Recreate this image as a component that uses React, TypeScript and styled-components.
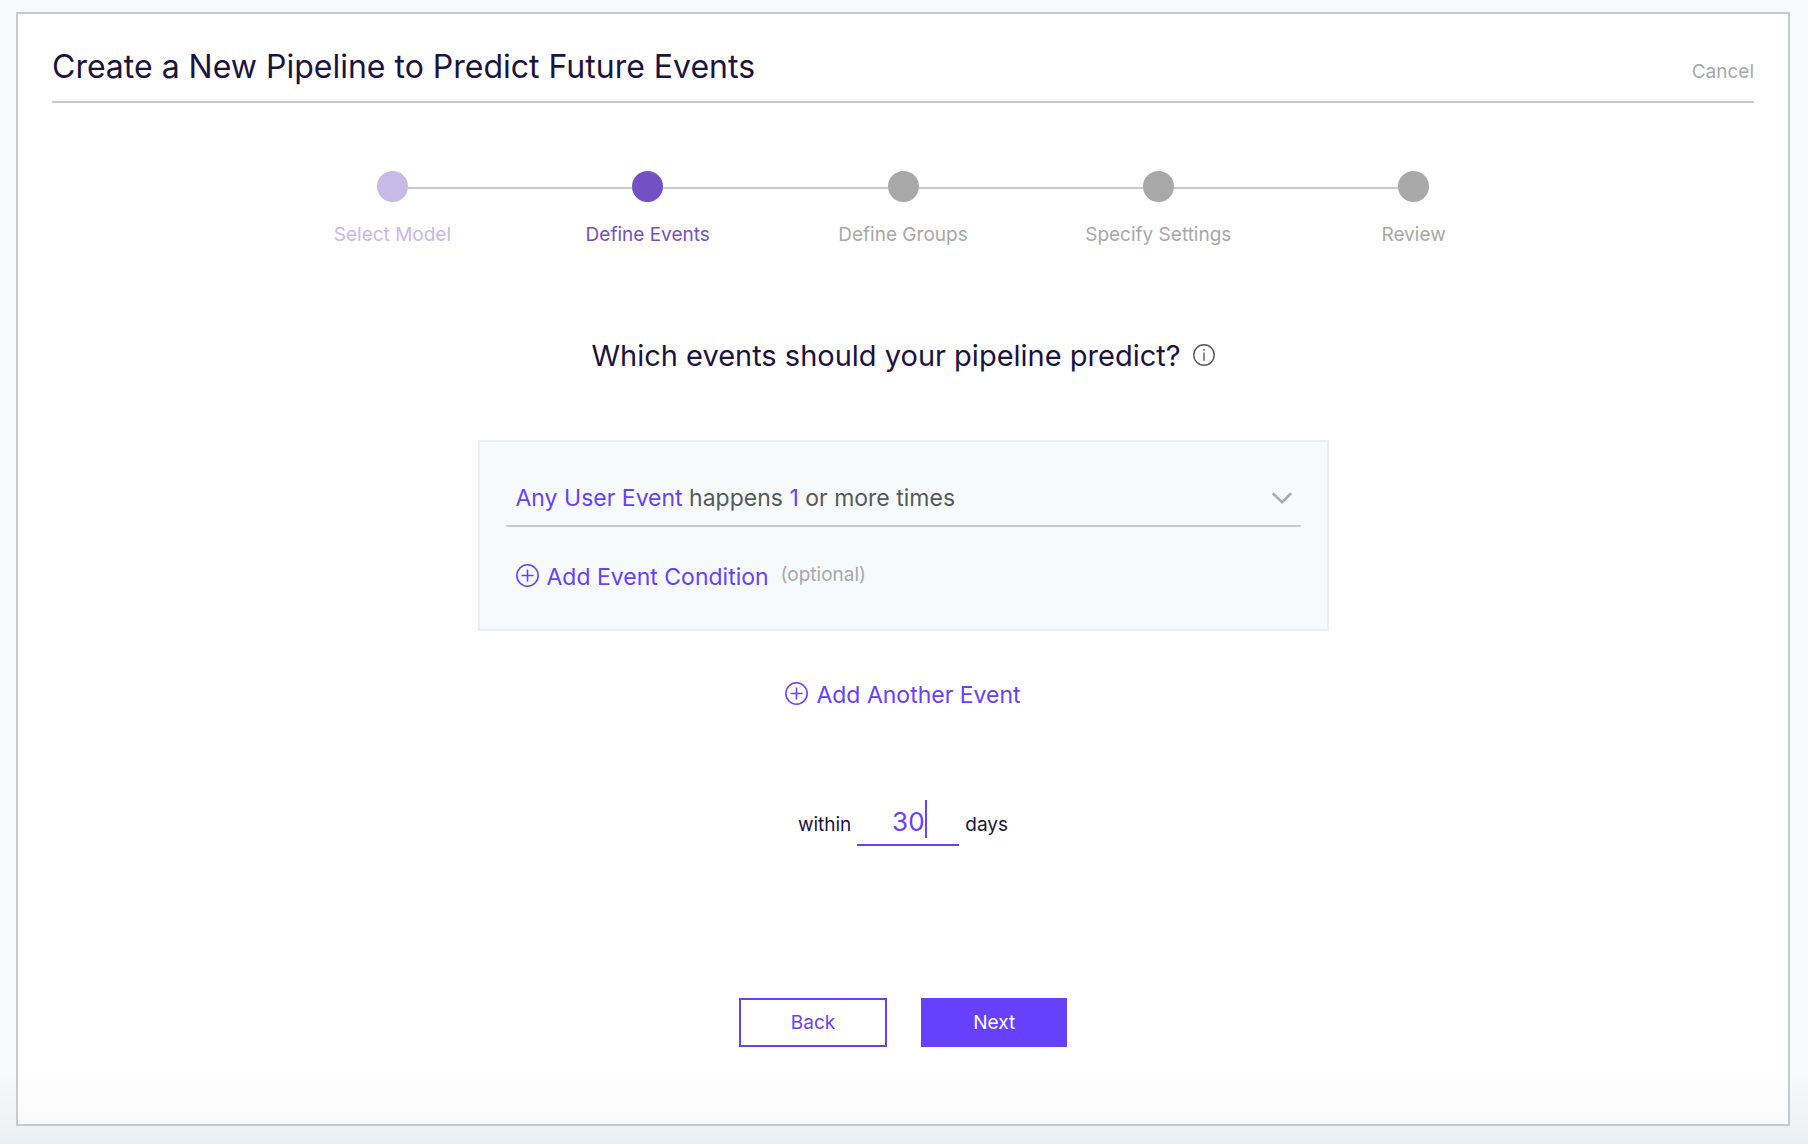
import React, { useState } from "react";
import styled, { createGlobalStyle } from "styled-components";

const color = {
  ink: "#1b1340",
  body: "#585858",
  muted: "#a8a8a8",
  line: "#c6cacc",
  panel: "#f6fafb",
  accent: "#6640fb",
  step: "#7350c3",
  stepDone: "#c7b9e8",
};

const GlobalStyle = createGlobalStyle`
  *, *::before, *::after { box-sizing: border-box; }
  body {
    margin: 0;
    background: ${color.panel};
    font-family: Inter, "Liberation Sans", sans-serif;
    font-weight: 400;
    color: ${color.ink};
  }
  button, input, select { font: inherit; color: inherit; }
`;

const Page = styled.div`
  display: flex;
  min-height: 100vh;
  padding: 12px 18px 18px 16px;
  background: linear-gradient(to top, #ebeff0, ${color.panel} 72px);
`;

const Card = styled.main`
  flex: 1;
  display: flex;
  flex-direction: column;
  align-items: center;
  padding: 32px 34px 40px;
  border: 2px solid ${color.line};
  background: linear-gradient(to top, #fafafa, #fff 56px);
`;

const Header = styled.header`
  align-self: stretch;
  display: flex;
  justify-content: space-between;
  align-items: baseline;
  padding-bottom: 13px;
  border-bottom: 2px solid ${color.line};
`;

const Title = styled.h1`
  margin: 0;
  font-size: 32px;
  line-height: 42px;
  font-weight: 400;
`;

const CancelLink = styled.a`
  font-size: 19px;
  line-height: 24px;
  color: ${color.muted};
  text-decoration: none;
`;

const Steps = styled.ol`
  display: flex;
  width: 75%;
  margin: 68px 0 0;
  padding: 0;
  list-style: none;
`;

type StepState = "done" | "current" | "todo";
const stepColor = { done: color.stepDone, current: color.step, todo: color.muted };

const Step = styled.li<{ $state: StepState }>`
  flex: 1;
  display: flex;
  flex-direction: column;
  align-items: center;
  gap: 21px;
  font-size: 19px;
  line-height: 24px;
  color: ${(p) => stepColor[p.$state]};
`;

const Track = styled.div`
  align-self: stretch;
  display: flex;
  align-items: center;
`;

const Segment = styled.span<{ $visible: boolean }>`
  flex: 1;
  height: 2px;
  margin-top: 2px;
  background: ${(p) => (p.$visible ? color.line : "transparent")};
`;

const Dot = styled.span`
  width: 31px;
  height: 31px;
  border-radius: 50%;
  background: currentColor;
`;

const Question = styled.h2`
  display: flex;
  align-items: center;
  gap: 12px;
  margin: 89px 0 0;
  font-size: 29px;
  line-height: 40px;
  font-weight: 400;
`;

const IconButton = styled.button`
  display: flex;
  padding: 0 0 2px;
  border: 0;
  background: none;
  color: ${color.body};
`;

const EventPanel = styled.section`
  width: 50%;
  margin-top: 64px;
  padding: 34px 26px;
  border: 2px solid #ededed;
  background: ${color.panel};
`;

const EventSelect = styled.label`
  position: relative;
  display: flex;
  justify-content: space-between;
  align-items: center;
  padding: 6px 8px 11px 10px;
  border-bottom: 2px solid ${color.line};
  border-radius: 2px;
  font-size: 23px;
  line-height: 32px;
  color: ${color.body};
`;

const Accent = styled.span`
  color: ${color.accent};
`;

const NativeSelect = styled.select`
  position: absolute;
  inset: 0;
  width: 100%;
  opacity: 0;
  cursor: pointer;
`;

const ConditionRow = styled.div`
  display: flex;
  align-items: flex-start;
  gap: 12px;
  padding: 32px 0 0 10px;
`;

const AddButton = styled.button`
  display: flex;
  align-items: center;
  gap: 8px;
  padding: 0;
  border: 0;
  background: none;
  font-size: 23px;
  line-height: 36px;
  color: ${color.accent};
  cursor: pointer;

  svg {
    margin-bottom: 4px;
  }
`;

const Optional = styled.span`
  font-size: 19px;
  line-height: 32px;
  color: ${color.muted};
`;

const AddAnother = styled.div`
  margin-top: 46px;
`;

const Window = styled.div`
  display: flex;
  align-items: baseline;
  gap: 6px;
  margin-top: 83px;
  font-size: 19px;
  line-height: 24px;
`;

const DaysField = styled.span`
  position: relative;
  display: flex;
`;

const DaysInput = styled.input`
  width: 102px;
  height: 50px;
  padding: 2px 0 0;
  border: 0;
  border-bottom: 2px solid ${color.accent};
  outline: 0;
  background: none;
  font-size: 26px;
  line-height: 32px;
  text-align: center;
  color: ${color.accent};
  caret-color: transparent;
`;

const Caret = styled.span`
  position: absolute;
  top: 4px;
  left: 68px;
  width: 2px;
  height: 38px;
  background: ${color.accent};
`;

const Actions = styled.div`
  display: flex;
  gap: 34px;
  margin-top: 152px;
`;

const ActionButton = styled.button<{ $primary?: boolean }>`
  height: 49px;
  padding: 0 50px;
  border: 2px solid ${color.accent};
  background: ${(p) => (p.$primary ? color.accent : "#fff")};
  color: ${(p) => (p.$primary ? "#fff" : color.accent)};
  font-size: 19px;
  line-height: 24px;
  cursor: pointer;
`;

const PlusIcon = () => (
  <svg width="23" height="23" viewBox="0 0 22 22" fill="none" stroke="currentColor" strokeWidth="1.5" aria-hidden="true">
    <circle cx="11" cy="11" r="10.2" />
    <path d="M11 5.3v11.4M5.3 11h11.4" />
  </svg>
);

const InfoIcon = () => (
  <svg width="22" height="22" viewBox="0 0 22 22" fill="none" stroke="currentColor" strokeWidth="1.4" aria-hidden="true">
    <circle cx="11" cy="11" r="10.2" />
    <path d="M11 8.6v8.2M11 5v1.8" />
  </svg>
);

const ChevronIcon = () => (
  <svg width="22" height="14" viewBox="0 0 22 14" fill="none" stroke="#a9adb3" strokeWidth="2.6" aria-hidden="true">
    <path d="M1.8 2.2 11 11.2l9.2-9" />
  </svg>
);

const steps: { name: string; state: StepState }[] = [
  { name: "Select Model", state: "done" },
  { name: "Define Events", state: "current" },
  { name: "Define Groups", state: "todo" },
  { name: "Specify Settings", state: "todo" },
  { name: "Review", state: "todo" },
];

export default function App() {
  const [days, setDays] = useState("30");

  return (
    <>
      <GlobalStyle />
      <Page>
        <Card>
          <Header>
            <Title>Create a New Pipeline to Predict Future Events</Title>
            <CancelLink href="#cancel">Cancel</CancelLink>
          </Header>

          <Steps>
            {steps.map((step, i) => (
              <Step key={step.name} $state={step.state} aria-current={step.state === "current" ? "step" : undefined}>
                <Track>
                  <Segment $visible={i > 0} />
                  <Dot />
                  <Segment $visible={i < steps.length - 1} />
                </Track>
                {step.name}
              </Step>
            ))}
          </Steps>

          <Question>
            Which events should your pipeline predict?
            <IconButton type="button" aria-label="More information">
              <InfoIcon />
            </IconButton>
          </Question>

          <EventPanel>
            <EventSelect>
              <span>
                <Accent>Any User Event</Accent> happens <Accent>1</Accent> or more times
              </span>
              <ChevronIcon />
              <NativeSelect aria-label="Event">
                <option>Any User Event</option>
              </NativeSelect>
            </EventSelect>
            <ConditionRow>
              <AddButton type="button">
                <PlusIcon />
                Add Event Condition
              </AddButton>
              <Optional>(optional)</Optional>
            </ConditionRow>
          </EventPanel>

          <AddAnother>
            <AddButton type="button">
              <PlusIcon />
              Add Another Event
            </AddButton>
          </AddAnother>

          <Window>
            <label htmlFor="days">within</label>
            <DaysField>
              <DaysInput id="days" inputMode="numeric" value={days} onChange={(e) => setDays(e.target.value)} />
              <Caret />
            </DaysField>
            <span>days</span>
          </Window>

          <Actions>
            <ActionButton type="button">Back</ActionButton>
            <ActionButton type="button" $primary>
              Next
            </ActionButton>
          </Actions>
        </Card>
      </Page>
    </>
  );
}
